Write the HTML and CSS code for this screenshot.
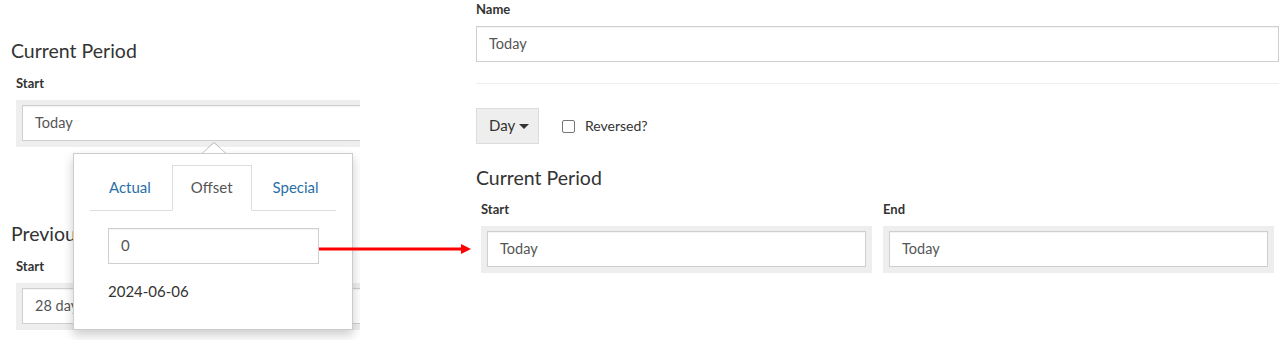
FILE: index.html
```html
<!DOCTYPE html>
<html lang="en">
<head>
    <meta charset="UTF-8">
    <meta name="viewport" content="width=device-width, initial-scale=1.0">
    <title>Period - Offset</title>
    <link rel="stylesheet" href="styles.css">
</head>
<body>
    <div class="page">
        <!-- Left: cropped shot of the period editor with the offset popover open -->
        <div class="shot">
            <div class="shot-inner">
                <h3 class="period-title">Current Period</h3>
                <label class="field-label">Start</label>
                <div class="date-wrap">
                    <div class="text-input">Today</div>
                </div>

                <h3 class="period-title previous">Previous Period</h3>
                <label class="field-label">Start</label>
                <div class="date-wrap">
                    <div class="text-input">28 days ago</div>
                </div>
            </div>

            <div class="popover">
                <div class="popover-arrow"></div>
                <ul class="nav-tabs">
                    <li>Actual</li>
                    <li class="active">Offset</li>
                    <li>Special</li>
                </ul>
                <div class="tab-pane">
                    <div class="text-input offset-input">0</div>
                    <div class="offset-date">2024-06-06</div>
                </div>
            </div>
        </div>

        <!-- red pointer from the offset field to the result -->
        <svg class="pointer" width="155" height="12" viewBox="0 0 155 12">
            <line x1="0" y1="6" x2="144" y2="6" stroke="#ff0000" stroke-width="3"/>
            <polygon points="142,1 152,6 142,11" fill="#ff0000"/>
        </svg>

        <!-- Right: the period form -->
        <div class="form">
            <label class="field-label">Name</label>
            <div class="text-input">Today</div>
            <hr class="divider">

            <div class="toolbar">
                <button class="btn-unit">Day <span class="caret"></span></button>
                <label class="check">
                    <span class="check-box"></span>
                    Reversed?
                </label>
            </div>

            <h3 class="period-title">Current Period</h3>
            <div class="period-row">
                <div class="period-col">
                    <label class="field-label">Start</label>
                    <div class="date-wrap">
                        <div class="text-input">Today</div>
                    </div>
                </div>
                <div class="period-col">
                    <label class="field-label">End</label>
                    <div class="date-wrap">
                        <div class="text-input">Today</div>
                    </div>
                </div>
            </div>
        </div>
    </div>
</body>
</html>
```

FILE: styles.css
```css
body {
    font-family: Lato, "Open Sans", sans-serif;
    margin: 0;
    padding: 0;
    background-color: #fff;
    color: #333;
}
.page {
    position: relative;
    display: flex;
    width: 1284px;
    height: 340px;
    overflow: hidden;
}
.shot {
    position: relative;
    width: 360px;
    height: 340px;
    flex: none;
    overflow: hidden;
}
.shot-inner {
    width: 500px;
    padding: 40px 0 0 11px;
}
.period-title {
    margin: 0;
    font-size: 19.5px;
    font-weight: normal;
    line-height: 22px;
    color: #333;
}
.previous {
    margin-top: 76px;
}
.field-label {
    display: block;
    font-size: 13px;
    font-weight: bold;
    line-height: 18px;
    color: #333;
    margin: 12px 0 8px 5px;
}
.date-wrap {
    background: #eeeeee;
    padding: 5px 6px 6px;
}
.shot .date-wrap {
    margin-left: 5px;
}
.text-input {
    box-sizing: border-box;
    height: 36px;
    line-height: 33px;
    padding: 0 12px;
    border: 1px solid #cfcfcf;
    background: #fff;
    box-shadow: inset 0 1px 1px rgba(0, 0, 0, 0.05);
    font-size: 14.5px;
    color: #555;
}

/* popover */
.popover {
    position: absolute;
    left: 73px;
    top: 153px;
    box-sizing: border-box;
    width: 280px;
    height: 177px;
    background: #fff;
    border: 1px solid rgba(0, 0, 0, 0.2);
    box-shadow: 0 5px 10px rgba(0, 0, 0, 0.2);
    padding: 11px 16px 0;
}
.popover-arrow {
    position: absolute;
    left: 128px;
    top: -12px;
    width: 0;
    height: 0;
    border-left: 12px solid transparent;
    border-right: 12px solid transparent;
    border-bottom: 11px solid rgba(0, 0, 0, 0.25);
}
.popover-arrow::after {
    content: "";
    position: absolute;
    left: -11px;
    top: 1px;
    border-left: 11px solid transparent;
    border-right: 11px solid transparent;
    border-bottom: 10px solid #fff;
}
.nav-tabs {
    display: flex;
    gap: 2px;
    list-style: none;
    margin: 0;
    padding: 0;
    border-bottom: 1px solid #ddd;
}
.nav-tabs li {
    height: 42px;
    line-height: 42px;
    padding: 0 18px 2px;
    font-size: 15px;
    color: #2a6fa8;
    border: 1px solid transparent;
    margin-bottom: -1px;
}
.nav-tabs li.active {
    color: #555;
    background: #fff;
    border-color: #ddd #ddd transparent;
}
.tab-pane {
    padding: 17px 0 0 18px;
}
.offset-input {
    width: 211px;
    font-size: 15px;
}
.offset-date {
    margin-top: 18px;
    font-size: 15px;
    color: #333;
}

.pointer {
    position: absolute;
    left: 319px;
    top: 243px;
}

/* right form */
.form {
    margin-left: 116px;
    width: 803px;
    flex: none;
}
.form > .field-label {
    margin: 0 0 8px 0;
}
.divider {
    border: 0;
    border-top: 1px solid #eee;
    margin: 21px 0 24px;
}
.toolbar {
    display: flex;
    align-items: center;
    margin-bottom: 23px;
}
.btn-unit {
    display: flex;
    align-items: center;
    box-sizing: border-box;
    height: 36px;
    width: 63px;
    padding: 0 0 2px 12px;
    font-family: inherit;
    font-size: 15px;
    color: #333;
    background: #eeeeee;
    border: 1px solid #dcdcdc;
    border-radius: 0;
}
.caret {
    display: inline-block;
    width: 0;
    height: 0;
    margin: 2px 0 0 4px;
    border-top: 5px solid #333;
    border-left: 5px solid transparent;
    border-right: 5px solid transparent;
}
.check {
    display: flex;
    align-items: center;
    margin: 0 0 2px 23px;
    font-size: 14px;
    color: #333;
}
.check-box {
    box-sizing: border-box;
    width: 13px;
    height: 13px;
    border: 1px solid #767676;
    border-radius: 2px;
    margin: 2px 10px 0 0;
}
.period-row {
    display: grid;
    grid-template-columns: 1fr 1fr;
    gap: 11px;
    padding: 0 5px;
}
.period-col .field-label {
    margin: 11px 0 8px 0;
}
```
